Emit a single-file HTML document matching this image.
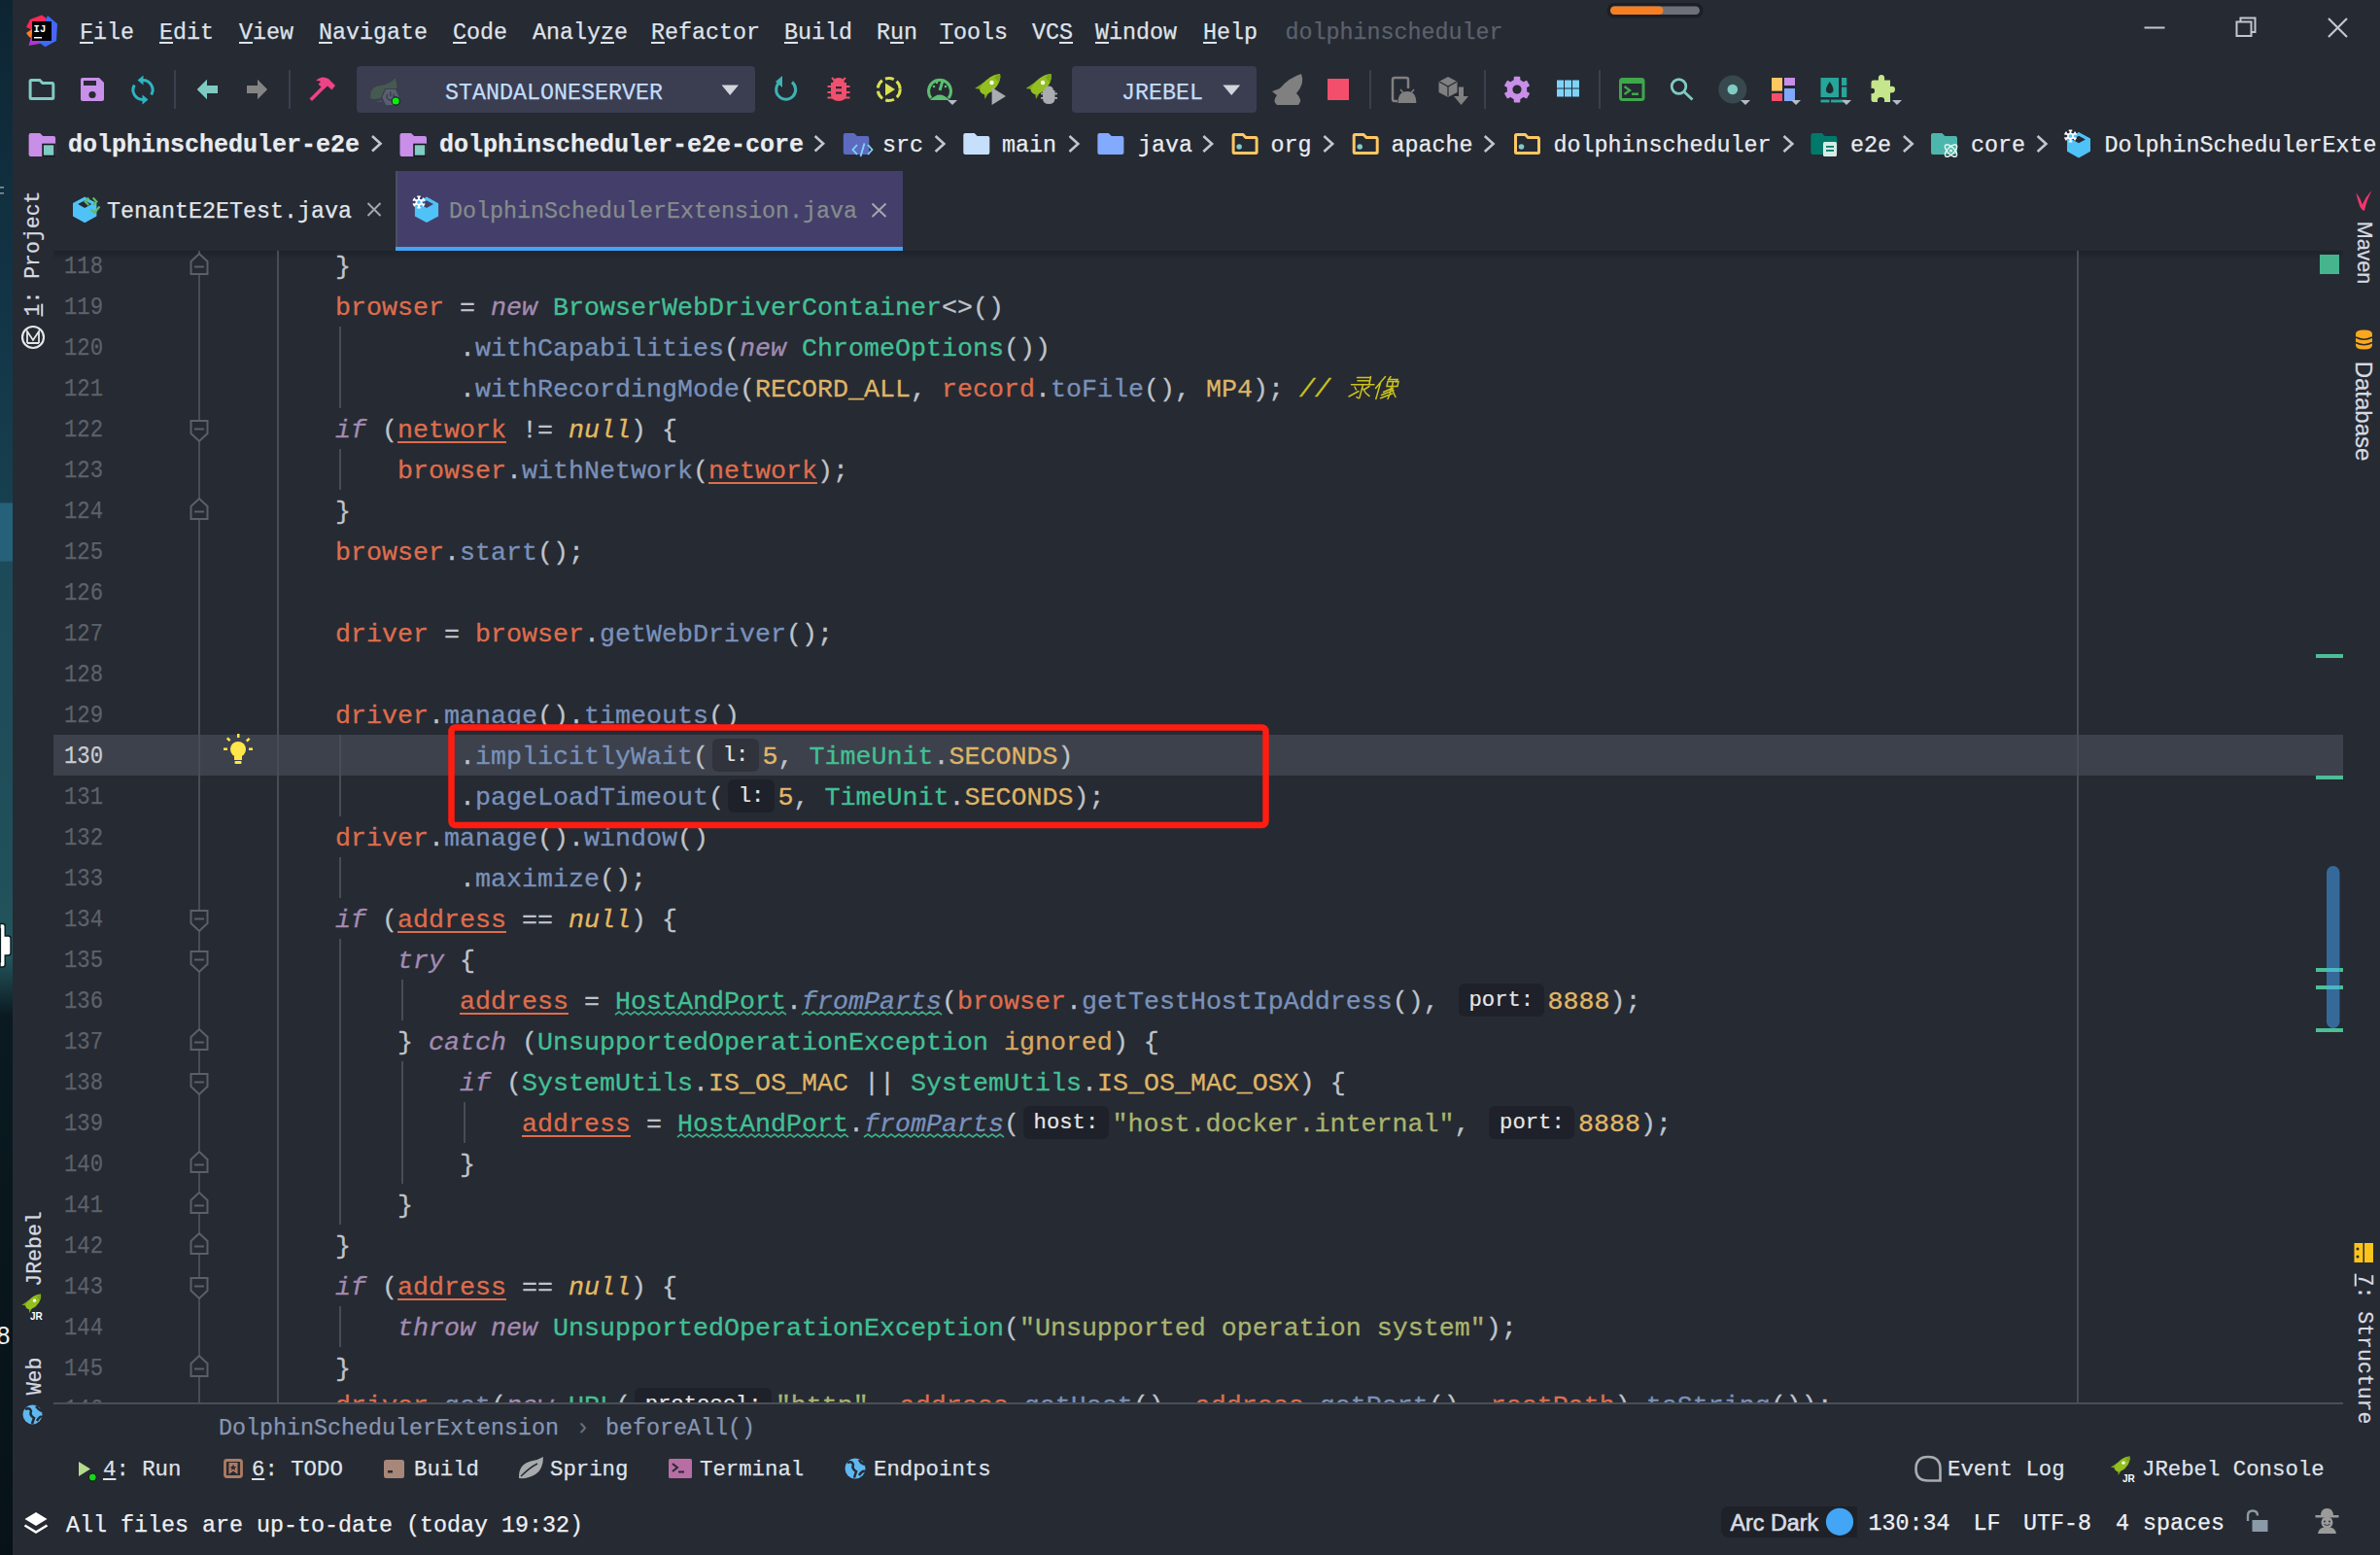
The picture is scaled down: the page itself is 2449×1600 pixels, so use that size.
<!DOCTYPE html><html><head><meta charset="utf-8"><style>
html,body{margin:0;padding:0}body{width:2449px;height:1600px;overflow:hidden;position:relative;background:#262a33}
.t{position:absolute;white-space:pre;-webkit-text-stroke:0.25px currentColor}.r{position:absolute}
.code{-webkit-text-stroke:0.3px currentColor;position:absolute;left:0;top:0;white-space:pre;font-family:"Liberation Mono",monospace;font-size:26.662px;height:42px;line-height:42px}
.hint{display:inline-block;position:relative;height:42px;vertical-align:top}
.hint b{position:absolute;left:4px;top:2px;-webkit-text-stroke:0.2px currentColor;height:34px;border-radius:6px;background:rgba(8,10,14,0.24);font-weight:normal;font-size:22.22px;line-height:36px;color:#e6e6e6;text-indent:10.7px}
</style></head><body>
<div class="r" style="left:0;top:0;width:13px;height:1600px;background:linear-gradient(180deg,#0d2533 0px,#123445 300px,#17404f 517px,#25627a 518px,#25627a 577px,#1d4a58 578px,#20505a 900px,#24555c 985px,#0a1a20 1045px,#061216 1600px)"></div>
<div class="r" style="left:367px;top:68px;width:410px;height:48px;background:#3b3d51;border-radius:4px;"></div>
<div class="r" style="left:1103px;top:68px;width:190px;height:48px;background:#3b3d51;border-radius:4px;"></div>
<div class="r" style="left:407px;top:176px;width:522px;height:78px;background:#433f6a;"></div>
<div class="r" style="left:407px;top:254px;width:522px;height:6px;background:#42a5f5;"></div>
<div class="r" style="left:407px;top:176px;width:2px;height:78px;background:#4d5060;"></div>
<div class="r" style="left:55px;top:258px;width:2356px;height:9px;background:linear-gradient(180deg,#1f2229,#262a33);"></div>
<div class="r" style="left:55px;top:756px;width:2356px;height:42px;background:#3d414c;"></div>
<div class="r" style="left:1771px;top:1550px;width:140px;height:32px;background:#1e2128;border-radius:8px 0 0 8px;"></div>
<div style="position:absolute;left:0;top:258px;width:2411px;height:1186px;overflow:hidden">
<div class="code" style="left:345.00px;top:-4px"><span style="color:#bfc3c9;">}</span></div>
<div class="code" style="left:345.00px;top:38px"><span style="color:#de6d4c;">browser</span><span style="color:#bfc3c9;"> = </span><span style="color:#a38bb1;font-style:italic;">new</span><span style="color:#bfc3c9;"> </span><span style="color:#42c094;">BrowserWebDriverContainer</span><span style="color:#bfc3c9;">&lt;&gt;()</span></div>
<div class="code" style="left:473.00px;top:80px"><span style="color:#bfc3c9;">.</span><span style="color:#7991ba;">withCapabilities</span><span style="color:#bfc3c9;">(</span><span style="color:#a38bb1;font-style:italic;">new</span><span style="color:#bfc3c9;"> </span><span style="color:#42c094;">ChromeOptions</span><span style="color:#bfc3c9;">())</span></div>
<div class="code" style="left:473.00px;top:122px"><span style="color:#bfc3c9;">.</span><span style="color:#7991ba;">withRecordingMode</span><span style="color:#bfc3c9;">(</span><span style="color:#dfb467;">RECORD_ALL</span><span style="color:#bfc3c9;">, </span><span style="color:#de6d4c;">record</span><span style="color:#bfc3c9;">.</span><span style="color:#7991ba;">toFile</span><span style="color:#bfc3c9;">(), </span><span style="color:#dfb467;">MP4</span><span style="color:#bfc3c9;">); </span><span style="color:#c8c41c;font-style:italic;">// </span><span style="display:inline-block;width:60px"></span></div>
<div class="code" style="left:345.00px;top:164px"><span style="color:#a38bb1;font-style:italic;">if</span><span style="color:#bfc3c9;"> (</span><span style="color:#de6d4c;text-decoration:underline;text-decoration-thickness:2px;text-underline-offset:3.5px;">network</span><span style="color:#bfc3c9;"> != </span><span style="color:#e2bb63;font-style:italic;">null</span><span style="color:#bfc3c9;">) {</span></div>
<div class="code" style="left:409.00px;top:206px"><span style="color:#de6d4c;">browser</span><span style="color:#bfc3c9;">.</span><span style="color:#7991ba;">withNetwork</span><span style="color:#bfc3c9;">(</span><span style="color:#de6d4c;text-decoration:underline;text-decoration-thickness:2px;text-underline-offset:3.5px;">network</span><span style="color:#bfc3c9;">);</span></div>
<div class="code" style="left:345.00px;top:248px"><span style="color:#bfc3c9;">}</span></div>
<div class="code" style="left:345.00px;top:290px"><span style="color:#de6d4c;">browser</span><span style="color:#bfc3c9;">.</span><span style="color:#7991ba;">start</span><span style="color:#bfc3c9;">();</span></div>
<div class="code" style="left:345.00px;top:332px"></div>
<div class="code" style="left:345.00px;top:374px"><span style="color:#de6d4c;">driver</span><span style="color:#bfc3c9;"> = </span><span style="color:#de6d4c;">browser</span><span style="color:#bfc3c9;">.</span><span style="color:#7991ba;">getWebDriver</span><span style="color:#bfc3c9;">();</span></div>
<div class="code" style="left:345.00px;top:416px"></div>
<div class="code" style="left:345.00px;top:458px"><span style="color:#de6d4c;">driver</span><span style="color:#bfc3c9;">.</span><span style="color:#7991ba;">manage</span><span style="color:#bfc3c9;">().</span><span style="color:#7991ba;">timeouts</span><span style="color:#bfc3c9;">()</span></div>
<div class="code" style="left:473.00px;top:500px"><span style="color:#bfc3c9;">.</span><span style="color:#7991ba;">implicitlyWait</span><span style="color:#bfc3c9;">(</span><span class="hint" style="width:55.57px"><b style="width:48.07px">l:</b></span><span style="color:#e2b866;">5</span><span style="color:#bfc3c9;">, </span><span style="color:#42c094;">TimeUnit</span><span style="color:#bfc3c9;">.</span><span style="color:#dfb467;">SECONDS</span><span style="color:#bfc3c9;">)</span></div>
<div class="code" style="left:473.00px;top:542px"><span style="color:#bfc3c9;">.</span><span style="color:#7991ba;">pageLoadTimeout</span><span style="color:#bfc3c9;">(</span><span class="hint" style="width:55.57px"><b style="width:48.07px">l:</b></span><span style="color:#e2b866;">5</span><span style="color:#bfc3c9;">, </span><span style="color:#42c094;">TimeUnit</span><span style="color:#bfc3c9;">.</span><span style="color:#dfb467;">SECONDS</span><span style="color:#bfc3c9;">);</span></div>
<div class="code" style="left:345.00px;top:584px"><span style="color:#de6d4c;">driver</span><span style="color:#bfc3c9;">.</span><span style="color:#7991ba;">manage</span><span style="color:#bfc3c9;">().</span><span style="color:#7991ba;">window</span><span style="color:#bfc3c9;">()</span></div>
<div class="code" style="left:473.00px;top:626px"><span style="color:#bfc3c9;">.</span><span style="color:#7991ba;">maximize</span><span style="color:#bfc3c9;">();</span></div>
<div class="code" style="left:345.00px;top:668px"><span style="color:#a38bb1;font-style:italic;">if</span><span style="color:#bfc3c9;"> (</span><span style="color:#de6d4c;text-decoration:underline;text-decoration-thickness:2px;text-underline-offset:3.5px;">address</span><span style="color:#bfc3c9;"> == </span><span style="color:#e2bb63;font-style:italic;">null</span><span style="color:#bfc3c9;">) {</span></div>
<div class="code" style="left:409.00px;top:710px"><span style="color:#a38bb1;font-style:italic;">try</span><span style="color:#bfc3c9;"> {</span></div>
<div class="code" style="left:473.00px;top:752px"><span style="color:#de6d4c;text-decoration:underline;text-decoration-thickness:2px;text-underline-offset:3.5px;">address</span><span style="color:#bfc3c9;"> = </span><span style="color:#42c094;">HostAndPort</span><span style="color:#bfc3c9;">.</span><span style="color:#7991ba;font-style:italic;">fromParts</span><span style="color:#bfc3c9;">(</span><span style="color:#de6d4c;">browser</span><span style="color:#bfc3c9;">.</span><span style="color:#7991ba;">getTestHostIpAddress</span><span style="color:#bfc3c9;">(), </span><span class="hint" style="width:95.56px"><b style="width:88.06px">port:</b></span><span style="color:#e2b866;">8888</span><span style="color:#bfc3c9;">);</span></div>
<div class="code" style="left:409.00px;top:794px"><span style="color:#bfc3c9;">} </span><span style="color:#a38bb1;font-style:italic;">catch</span><span style="color:#bfc3c9;"> (</span><span style="color:#42c094;">UnsupportedOperationException</span><span style="color:#bfc3c9;"> </span><span style="color:#d8a862;">ignored</span><span style="color:#bfc3c9;">) {</span></div>
<div class="code" style="left:473.00px;top:836px"><span style="color:#a38bb1;font-style:italic;">if</span><span style="color:#bfc3c9;"> (</span><span style="color:#42c094;">SystemUtils</span><span style="color:#bfc3c9;">.</span><span style="color:#dfb467;">IS_OS_MAC</span><span style="color:#bfc3c9;"> || </span><span style="color:#42c094;">SystemUtils</span><span style="color:#bfc3c9;">.</span><span style="color:#dfb467;">IS_OS_MAC_OSX</span><span style="color:#bfc3c9;">) {</span></div>
<div class="code" style="left:537.00px;top:878px"><span style="color:#de6d4c;text-decoration:underline;text-decoration-thickness:2px;text-underline-offset:3.5px;">address</span><span style="color:#bfc3c9;"> = </span><span style="color:#42c094;">HostAndPort</span><span style="color:#bfc3c9;">.</span><span style="color:#7991ba;font-style:italic;">fromParts</span><span style="color:#bfc3c9;">(</span><span class="hint" style="width:95.56px"><b style="width:88.06px">host:</b></span><span style="color:#a9b46f;">"host.docker.internal"</span><span style="color:#bfc3c9;">, </span><span class="hint" style="width:95.56px"><b style="width:88.06px">port:</b></span><span style="color:#e2b866;">8888</span><span style="color:#bfc3c9;">);</span></div>
<div class="code" style="left:473.00px;top:920px"><span style="color:#bfc3c9;">}</span></div>
<div class="code" style="left:409.00px;top:962px"><span style="color:#bfc3c9;">}</span></div>
<div class="code" style="left:345.00px;top:1004px"><span style="color:#bfc3c9;">}</span></div>
<div class="code" style="left:345.00px;top:1046px"><span style="color:#a38bb1;font-style:italic;">if</span><span style="color:#bfc3c9;"> (</span><span style="color:#de6d4c;text-decoration:underline;text-decoration-thickness:2px;text-underline-offset:3.5px;">address</span><span style="color:#bfc3c9;"> == </span><span style="color:#e2bb63;font-style:italic;">null</span><span style="color:#bfc3c9;">) {</span></div>
<div class="code" style="left:409.00px;top:1088px"><span style="color:#a38bb1;font-style:italic;">throw</span><span style="color:#bfc3c9;"> </span><span style="color:#a38bb1;font-style:italic;">new</span><span style="color:#bfc3c9;"> </span><span style="color:#42c094;">UnsupportedOperationException</span><span style="color:#bfc3c9;">(</span><span style="color:#a9b46f;">"Unsupported operation system"</span><span style="color:#bfc3c9;">);</span></div>
<div class="code" style="left:345.00px;top:1130px"><span style="color:#bfc3c9;">}</span></div>
<div class="code" style="left:345.00px;top:1168px"><span style="color:#de6d4c;">driver</span><span style="color:#bfc3c9;">.</span><span style="color:#7991ba;">get</span><span style="color:#bfc3c9;">(</span><span style="color:#a38bb1;font-style:italic;">new</span><span style="color:#bfc3c9;"> </span><span style="color:#42c094;">URL</span><span style="color:#bfc3c9;">(</span><span class="hint" style="width:148.90px"><b style="width:141.40px">protocol:</b></span><span style="color:#a9b46f;">"http"</span><span style="color:#bfc3c9;">, </span><span style="color:#de6d4c;">address</span><span style="color:#bfc3c9;">.</span><span style="color:#7991ba;">getHost</span><span style="color:#bfc3c9;">(), </span><span style="color:#de6d4c;">address</span><span style="color:#bfc3c9;">.</span><span style="color:#7991ba;">getPort</span><span style="color:#bfc3c9;">(), </span><span style="color:#de6d4c;">rootPath</span><span style="color:#bfc3c9;">).</span><span style="color:#7991ba;">toString</span><span style="color:#bfc3c9;">());</span></div>
</div>
<div style="position:absolute;left:52.5px;top:258px;width:100px;height:1186px;overflow:hidden">
<div class="t" style="left:0;width:53px;text-align:right;top:1.48px;font-size:26.0px;line-height:31.200px;color:#5d6169;font-family:'Liberation Mono', monospace;transform:scaleX(0.855);transform-origin:53px 0">118</div>
<div class="t" style="left:0;width:53px;text-align:right;top:43.48px;font-size:26.0px;line-height:31.200px;color:#5d6169;font-family:'Liberation Mono', monospace;transform:scaleX(0.855);transform-origin:53px 0">119</div>
<div class="t" style="left:0;width:53px;text-align:right;top:85.48px;font-size:26.0px;line-height:31.200px;color:#5d6169;font-family:'Liberation Mono', monospace;transform:scaleX(0.855);transform-origin:53px 0">120</div>
<div class="t" style="left:0;width:53px;text-align:right;top:127.48px;font-size:26.0px;line-height:31.200px;color:#5d6169;font-family:'Liberation Mono', monospace;transform:scaleX(0.855);transform-origin:53px 0">121</div>
<div class="t" style="left:0;width:53px;text-align:right;top:169.48px;font-size:26.0px;line-height:31.200px;color:#5d6169;font-family:'Liberation Mono', monospace;transform:scaleX(0.855);transform-origin:53px 0">122</div>
<div class="t" style="left:0;width:53px;text-align:right;top:211.48px;font-size:26.0px;line-height:31.200px;color:#5d6169;font-family:'Liberation Mono', monospace;transform:scaleX(0.855);transform-origin:53px 0">123</div>
<div class="t" style="left:0;width:53px;text-align:right;top:253.48px;font-size:26.0px;line-height:31.200px;color:#5d6169;font-family:'Liberation Mono', monospace;transform:scaleX(0.855);transform-origin:53px 0">124</div>
<div class="t" style="left:0;width:53px;text-align:right;top:295.48px;font-size:26.0px;line-height:31.200px;color:#5d6169;font-family:'Liberation Mono', monospace;transform:scaleX(0.855);transform-origin:53px 0">125</div>
<div class="t" style="left:0;width:53px;text-align:right;top:337.48px;font-size:26.0px;line-height:31.200px;color:#5d6169;font-family:'Liberation Mono', monospace;transform:scaleX(0.855);transform-origin:53px 0">126</div>
<div class="t" style="left:0;width:53px;text-align:right;top:379.48px;font-size:26.0px;line-height:31.200px;color:#5d6169;font-family:'Liberation Mono', monospace;transform:scaleX(0.855);transform-origin:53px 0">127</div>
<div class="t" style="left:0;width:53px;text-align:right;top:421.48px;font-size:26.0px;line-height:31.200px;color:#5d6169;font-family:'Liberation Mono', monospace;transform:scaleX(0.855);transform-origin:53px 0">128</div>
<div class="t" style="left:0;width:53px;text-align:right;top:463.48px;font-size:26.0px;line-height:31.200px;color:#5d6169;font-family:'Liberation Mono', monospace;transform:scaleX(0.855);transform-origin:53px 0">129</div>
<div class="t" style="left:0;width:53px;text-align:right;top:505.48px;font-size:26.0px;line-height:31.200px;color:#c9ccd0;font-family:'Liberation Mono', monospace;transform:scaleX(0.855);transform-origin:53px 0">130</div>
<div class="t" style="left:0;width:53px;text-align:right;top:547.48px;font-size:26.0px;line-height:31.200px;color:#5d6169;font-family:'Liberation Mono', monospace;transform:scaleX(0.855);transform-origin:53px 0">131</div>
<div class="t" style="left:0;width:53px;text-align:right;top:589.48px;font-size:26.0px;line-height:31.200px;color:#5d6169;font-family:'Liberation Mono', monospace;transform:scaleX(0.855);transform-origin:53px 0">132</div>
<div class="t" style="left:0;width:53px;text-align:right;top:631.48px;font-size:26.0px;line-height:31.200px;color:#5d6169;font-family:'Liberation Mono', monospace;transform:scaleX(0.855);transform-origin:53px 0">133</div>
<div class="t" style="left:0;width:53px;text-align:right;top:673.48px;font-size:26.0px;line-height:31.200px;color:#5d6169;font-family:'Liberation Mono', monospace;transform:scaleX(0.855);transform-origin:53px 0">134</div>
<div class="t" style="left:0;width:53px;text-align:right;top:715.48px;font-size:26.0px;line-height:31.200px;color:#5d6169;font-family:'Liberation Mono', monospace;transform:scaleX(0.855);transform-origin:53px 0">135</div>
<div class="t" style="left:0;width:53px;text-align:right;top:757.48px;font-size:26.0px;line-height:31.200px;color:#5d6169;font-family:'Liberation Mono', monospace;transform:scaleX(0.855);transform-origin:53px 0">136</div>
<div class="t" style="left:0;width:53px;text-align:right;top:799.48px;font-size:26.0px;line-height:31.200px;color:#5d6169;font-family:'Liberation Mono', monospace;transform:scaleX(0.855);transform-origin:53px 0">137</div>
<div class="t" style="left:0;width:53px;text-align:right;top:841.48px;font-size:26.0px;line-height:31.200px;color:#5d6169;font-family:'Liberation Mono', monospace;transform:scaleX(0.855);transform-origin:53px 0">138</div>
<div class="t" style="left:0;width:53px;text-align:right;top:883.48px;font-size:26.0px;line-height:31.200px;color:#5d6169;font-family:'Liberation Mono', monospace;transform:scaleX(0.855);transform-origin:53px 0">139</div>
<div class="t" style="left:0;width:53px;text-align:right;top:925.48px;font-size:26.0px;line-height:31.200px;color:#5d6169;font-family:'Liberation Mono', monospace;transform:scaleX(0.855);transform-origin:53px 0">140</div>
<div class="t" style="left:0;width:53px;text-align:right;top:967.48px;font-size:26.0px;line-height:31.200px;color:#5d6169;font-family:'Liberation Mono', monospace;transform:scaleX(0.855);transform-origin:53px 0">141</div>
<div class="t" style="left:0;width:53px;text-align:right;top:1009.48px;font-size:26.0px;line-height:31.200px;color:#5d6169;font-family:'Liberation Mono', monospace;transform:scaleX(0.855);transform-origin:53px 0">142</div>
<div class="t" style="left:0;width:53px;text-align:right;top:1051.48px;font-size:26.0px;line-height:31.200px;color:#5d6169;font-family:'Liberation Mono', monospace;transform:scaleX(0.855);transform-origin:53px 0">143</div>
<div class="t" style="left:0;width:53px;text-align:right;top:1093.48px;font-size:26.0px;line-height:31.200px;color:#5d6169;font-family:'Liberation Mono', monospace;transform:scaleX(0.855);transform-origin:53px 0">144</div>
<div class="t" style="left:0;width:53px;text-align:right;top:1135.48px;font-size:26.0px;line-height:31.200px;color:#5d6169;font-family:'Liberation Mono', monospace;transform:scaleX(0.855);transform-origin:53px 0">145</div>
<div class="t" style="left:0;width:53px;text-align:right;top:1177.48px;font-size:26.0px;line-height:31.200px;color:#5d6169;font-family:'Liberation Mono', monospace;transform:scaleX(0.855);transform-origin:53px 0">146</div>
</div>
<div class="t" style="left:82.00px;top:19.79px;font-size:23.330px;line-height:27.996px;color:#dfe3ea;font-family:'Liberation Mono', monospace;font-weight:normal;font-style:normal;"><span style="text-decoration:underline;text-decoration-thickness:2px;text-underline-offset:3px">F</span>ile</div>
<div class="t" style="left:164.00px;top:19.79px;font-size:23.330px;line-height:27.996px;color:#dfe3ea;font-family:'Liberation Mono', monospace;font-weight:normal;font-style:normal;"><span style="text-decoration:underline;text-decoration-thickness:2px;text-underline-offset:3px">E</span>dit</div>
<div class="t" style="left:246.00px;top:19.79px;font-size:23.330px;line-height:27.996px;color:#dfe3ea;font-family:'Liberation Mono', monospace;font-weight:normal;font-style:normal;"><span style="text-decoration:underline;text-decoration-thickness:2px;text-underline-offset:3px">V</span>iew</div>
<div class="t" style="left:328.00px;top:19.79px;font-size:23.330px;line-height:27.996px;color:#dfe3ea;font-family:'Liberation Mono', monospace;font-weight:normal;font-style:normal;"><span style="text-decoration:underline;text-decoration-thickness:2px;text-underline-offset:3px">N</span>avigate</div>
<div class="t" style="left:466.00px;top:19.79px;font-size:23.330px;line-height:27.996px;color:#dfe3ea;font-family:'Liberation Mono', monospace;font-weight:normal;font-style:normal;"><span style="text-decoration:underline;text-decoration-thickness:2px;text-underline-offset:3px">C</span>ode</div>
<div class="t" style="left:548.00px;top:19.79px;font-size:23.330px;line-height:27.996px;color:#dfe3ea;font-family:'Liberation Mono', monospace;font-weight:normal;font-style:normal;">Analy<span style="text-decoration:underline;text-decoration-thickness:2px;text-underline-offset:3px">z</span>e</div>
<div class="t" style="left:670.00px;top:19.79px;font-size:23.330px;line-height:27.996px;color:#dfe3ea;font-family:'Liberation Mono', monospace;font-weight:normal;font-style:normal;"><span style="text-decoration:underline;text-decoration-thickness:2px;text-underline-offset:3px">R</span>efactor</div>
<div class="t" style="left:807.00px;top:19.79px;font-size:23.330px;line-height:27.996px;color:#dfe3ea;font-family:'Liberation Mono', monospace;font-weight:normal;font-style:normal;"><span style="text-decoration:underline;text-decoration-thickness:2px;text-underline-offset:3px">B</span>uild</div>
<div class="t" style="left:902.00px;top:19.79px;font-size:23.330px;line-height:27.996px;color:#dfe3ea;font-family:'Liberation Mono', monospace;font-weight:normal;font-style:normal;">R<span style="text-decoration:underline;text-decoration-thickness:2px;text-underline-offset:3px">u</span>n</div>
<div class="t" style="left:967.00px;top:19.79px;font-size:23.330px;line-height:27.996px;color:#dfe3ea;font-family:'Liberation Mono', monospace;font-weight:normal;font-style:normal;"><span style="text-decoration:underline;text-decoration-thickness:2px;text-underline-offset:3px">T</span>ools</div>
<div class="t" style="left:1062.00px;top:19.79px;font-size:23.330px;line-height:27.996px;color:#dfe3ea;font-family:'Liberation Mono', monospace;font-weight:normal;font-style:normal;">VC<span style="text-decoration:underline;text-decoration-thickness:2px;text-underline-offset:3px">S</span></div>
<div class="t" style="left:1127.00px;top:19.79px;font-size:23.330px;line-height:27.996px;color:#dfe3ea;font-family:'Liberation Mono', monospace;font-weight:normal;font-style:normal;"><span style="text-decoration:underline;text-decoration-thickness:2px;text-underline-offset:3px">W</span>indow</div>
<div class="t" style="left:1238.00px;top:19.79px;font-size:23.330px;line-height:27.996px;color:#dfe3ea;font-family:'Liberation Mono', monospace;font-weight:normal;font-style:normal;"><span style="text-decoration:underline;text-decoration-thickness:2px;text-underline-offset:3px">H</span>elp</div>
<div class="t" style="left:1322.50px;top:19.79px;font-size:23.330px;line-height:27.996px;color:#5b616c;font-family:'Liberation Mono', monospace;font-weight:normal;font-style:normal;">dolphinscheduler</div>
<div class="t" style="left:458.00px;top:81.79px;font-size:23.330px;line-height:27.996px;color:#c2dcf7;font-family:'Liberation Mono', monospace;font-weight:normal;font-style:normal;">STANDALONESERVER</div>
<div class="t" style="left:1154.00px;top:81.79px;font-size:23.330px;line-height:27.996px;color:#c2dcf7;font-family:'Liberation Mono', monospace;font-weight:normal;font-style:normal;">JREBEL</div>
<div class="t" style="left:70.00px;top:134.85px;font-size:25.000px;line-height:30.000px;color:#e9ecf0;font-family:'Liberation Mono', monospace;font-weight:bold;font-style:normal;">dolphinscheduler-e2e</div>
<div class="t" style="left:452.00px;top:134.85px;font-size:25.000px;line-height:30.000px;color:#e9ecf0;font-family:'Liberation Mono', monospace;font-weight:bold;font-style:normal;">dolphinscheduler-e2e-core</div>
<div class="t" style="left:908.00px;top:136.29px;font-size:23.330px;line-height:27.996px;color:#e9ecf0;font-family:'Liberation Mono', monospace;font-weight:normal;font-style:normal;">src</div>
<div class="t" style="left:1031.00px;top:136.29px;font-size:23.330px;line-height:27.996px;color:#e9ecf0;font-family:'Liberation Mono', monospace;font-weight:normal;font-style:normal;">main</div>
<div class="t" style="left:1171.00px;top:136.29px;font-size:23.330px;line-height:27.996px;color:#e9ecf0;font-family:'Liberation Mono', monospace;font-weight:normal;font-style:normal;">java</div>
<div class="t" style="left:1307.50px;top:136.29px;font-size:23.330px;line-height:27.996px;color:#e9ecf0;font-family:'Liberation Mono', monospace;font-weight:normal;font-style:normal;">org</div>
<div class="t" style="left:1431.50px;top:136.29px;font-size:23.330px;line-height:27.996px;color:#e9ecf0;font-family:'Liberation Mono', monospace;font-weight:normal;font-style:normal;">apache</div>
<div class="t" style="left:1598.50px;top:136.29px;font-size:23.330px;line-height:27.996px;color:#e9ecf0;font-family:'Liberation Mono', monospace;font-weight:normal;font-style:normal;">dolphinscheduler</div>
<div class="t" style="left:1904.00px;top:136.29px;font-size:23.330px;line-height:27.996px;color:#e9ecf0;font-family:'Liberation Mono', monospace;font-weight:normal;font-style:normal;">e2e</div>
<div class="t" style="left:2028.00px;top:136.29px;font-size:23.330px;line-height:27.996px;color:#e9ecf0;font-family:'Liberation Mono', monospace;font-weight:normal;font-style:normal;">core</div>
<div class="t" style="left:2165.50px;top:136.29px;font-size:23.330px;line-height:27.996px;color:#e9ecf0;font-family:'Liberation Mono', monospace;font-weight:normal;font-style:normal;">DolphinSchedulerExte</div>
<div class="t" style="left:110.00px;top:203.79px;font-size:23.330px;line-height:27.996px;color:#e1e5ea;font-family:'Liberation Mono', monospace;font-weight:normal;font-style:normal;">TenantE2ETest.java</div>
<div class="t" style="left:462.00px;top:203.79px;font-size:23.330px;line-height:27.996px;color:#868c8c;font-family:'Liberation Mono', monospace;font-weight:normal;font-style:normal;">DolphinSchedulerExtension.java</div>
<div class="t" style="left:35px;top:261px;font-size:21.5px;line-height:21.5px;color:#d6dae0;font-family:'Liberation Mono', monospace;font-weight:normal;transform:translate(-50%,-50%) rotate(-90deg)"><span style="text-decoration:underline;text-underline-offset:2px">1</span>: Project</div>
<div class="t" style="left:36.5px;top:1284.5px;font-size:21.5px;line-height:21.5px;color:#d6dae0;font-family:'Liberation Mono', monospace;font-weight:normal;transform:translate(-50%,-50%) rotate(-90deg)">JRebel</div>
<div class="t" style="left:36.5px;top:1416px;font-size:21.5px;line-height:21.5px;color:#d6dae0;font-family:'Liberation Mono', monospace;font-weight:normal;transform:translate(-50%,-50%) rotate(-90deg)">Web</div>
<div class="t" style="left:2432px;top:260px;font-size:21.5px;line-height:21.5px;color:#d6dae0;font-family:'Liberation Sans', sans-serif;font-weight:normal;transform:translate(-50%,-50%) rotate(90deg)">Maven</div>
<div class="t" style="left:2432px;top:422.5px;font-size:24.0px;line-height:24.0px;color:#d6dae0;font-family:'Liberation Sans', sans-serif;font-weight:normal;transform:translate(-50%,-50%) rotate(90deg)">Database</div>
<div class="t" style="left:2432px;top:1388px;font-size:21.5px;line-height:21.5px;color:#d6dae0;font-family:'Liberation Mono', monospace;font-weight:normal;transform:translate(-50%,-50%) rotate(90deg)"><span style="text-decoration:underline;text-underline-offset:2px">7</span>: Structure</div>
<div class="t" style="left:225.00px;top:1455.79px;font-size:23.330px;line-height:27.996px;color:#8796b2;font-family:'Liberation Mono', monospace;font-weight:normal;font-style:normal;">DolphinSchedulerExtension</div>
<div class="t" style="left:623.00px;top:1455.79px;font-size:23.330px;line-height:27.996px;color:#8796b2;font-family:'Liberation Mono', monospace;font-weight:normal;font-style:normal;">beforeAll()</div>
<div class="t" style="left:596.00px;top:1453.91px;font-size:23.330px;line-height:27.996px;color:#6a7280;font-family:'Liberation Sans', sans-serif;font-weight:normal;font-style:normal;">›</div>
<div class="t" style="left:106.00px;top:1499.16px;font-size:22.330px;line-height:26.796px;color:#dfe3ea;font-family:'Liberation Mono', monospace;font-weight:normal;font-style:normal;"><span style="text-decoration:underline;text-decoration-thickness:2px;text-underline-offset:3px">4</span>: Run</div>
<div class="t" style="left:259.00px;top:1499.16px;font-size:22.330px;line-height:26.796px;color:#dfe3ea;font-family:'Liberation Mono', monospace;font-weight:normal;font-style:normal;"><span style="text-decoration:underline;text-decoration-thickness:2px;text-underline-offset:3px">6</span>: TODO</div>
<div class="t" style="left:426.00px;top:1499.16px;font-size:22.330px;line-height:26.796px;color:#dfe3ea;font-family:'Liberation Mono', monospace;font-weight:normal;font-style:normal;">Build</div>
<div class="t" style="left:566.00px;top:1499.16px;font-size:22.330px;line-height:26.796px;color:#dfe3ea;font-family:'Liberation Mono', monospace;font-weight:normal;font-style:normal;">Spring</div>
<div class="t" style="left:720.00px;top:1499.16px;font-size:22.330px;line-height:26.796px;color:#dfe3ea;font-family:'Liberation Mono', monospace;font-weight:normal;font-style:normal;">Terminal</div>
<div class="t" style="left:899.00px;top:1499.16px;font-size:22.330px;line-height:26.796px;color:#dfe3ea;font-family:'Liberation Mono', monospace;font-weight:normal;font-style:normal;">Endpoints</div>
<div class="t" style="left:2004.00px;top:1499.16px;font-size:22.330px;line-height:26.796px;color:#dfe3ea;font-family:'Liberation Mono', monospace;font-weight:normal;font-style:normal;">Event Log</div>
<div class="t" style="left:2204.00px;top:1499.16px;font-size:22.330px;line-height:26.796px;color:#dfe3ea;font-family:'Liberation Mono', monospace;font-weight:normal;font-style:normal;">JRebel Console</div>
<div class="t" style="left:68.00px;top:1555.79px;font-size:23.330px;line-height:27.996px;color:#eef0f3;font-family:'Liberation Mono', monospace;font-weight:normal;font-style:normal;">All files are up-to-date (today 19:32)</div>
<div class="t" style="left:1922.50px;top:1553.79px;font-size:23.330px;line-height:27.996px;color:#eef0f3;font-family:'Liberation Mono', monospace;font-weight:normal;font-style:normal;">130:34</div>
<div class="t" style="left:2030.50px;top:1553.79px;font-size:23.330px;line-height:27.996px;color:#eef0f3;font-family:'Liberation Mono', monospace;font-weight:normal;font-style:normal;">LF</div>
<div class="t" style="left:2082.00px;top:1553.79px;font-size:23.330px;line-height:27.996px;color:#eef0f3;font-family:'Liberation Mono', monospace;font-weight:normal;font-style:normal;">UTF-8</div>
<div class="t" style="left:2177.00px;top:1553.79px;font-size:23.330px;line-height:27.996px;color:#eef0f3;font-family:'Liberation Mono', monospace;font-weight:normal;font-style:normal;">4 spaces</div>
<div class="t" style="left:1780.50px;top:1553.94px;font-size:23.300px;line-height:27.960px;color:#d8dce4;font-family:'Liberation Sans', sans-serif;font-weight:normal;font-style:normal;-webkit-text-stroke:0.6px #d8dce4;">Arc Dark</div>
<svg style="position:absolute;left:0;top:0" width="2449" height="1600" viewBox="0 0 2449 1600"><rect x="285" y="258" width="2" height="1186" fill="#484c56"/><rect x="204" y="258" width="2" height="1186" fill="#484c56"/><rect x="349.0" y="336" width="2" height="84" fill="#484c56"/><rect x="349.0" y="462" width="2" height="42" fill="#484c56"/><rect x="349.0" y="756" width="2" height="84" fill="#484c56"/><rect x="349.0" y="882" width="2" height="42" fill="#484c56"/><rect x="349.0" y="966" width="2" height="294" fill="#484c56"/><rect x="413.0" y="1008" width="2" height="42" fill="#484c56"/><rect x="413.0" y="1092" width="2" height="126" fill="#484c56"/><rect x="477.0" y="1134" width="2" height="42" fill="#484c56"/><rect x="349.0" y="1344" width="2" height="42" fill="#484c56"/><rect x="2137" y="258" width="2" height="1186" fill="#484c56"/><path d="M196.5 433 H213.5 V446 L205 454 L196.5 446 Z" fill="#262a33" stroke="#5a5f69" stroke-width="2"/><rect x="200" y="440.5" width="10" height="2" fill="#5a5f69"/><path d="M196.5 937 H213.5 V950 L205 958 L196.5 950 Z" fill="#262a33" stroke="#5a5f69" stroke-width="2"/><rect x="200" y="944.5" width="10" height="2" fill="#5a5f69"/><path d="M196.5 979 H213.5 V992 L205 1000 L196.5 992 Z" fill="#262a33" stroke="#5a5f69" stroke-width="2"/><rect x="200" y="986.5" width="10" height="2" fill="#5a5f69"/><path d="M196.5 1105 H213.5 V1118 L205 1126 L196.5 1118 Z" fill="#262a33" stroke="#5a5f69" stroke-width="2"/><rect x="200" y="1112.5" width="10" height="2" fill="#5a5f69"/><path d="M196.5 1315 H213.5 V1328 L205 1336 L196.5 1328 Z" fill="#262a33" stroke="#5a5f69" stroke-width="2"/><rect x="200" y="1322.5" width="10" height="2" fill="#5a5f69"/><path d="M196.5 282 H213.5 V269 L205 261 L196.5 269 Z" fill="#262a33" stroke="#5a5f69" stroke-width="2"/><rect x="200" y="273.5" width="10" height="2" fill="#5a5f69"/><path d="M196.5 534 H213.5 V521 L205 513 L196.5 521 Z" fill="#262a33" stroke="#5a5f69" stroke-width="2"/><rect x="200" y="525.5" width="10" height="2" fill="#5a5f69"/><path d="M196.5 1080 H213.5 V1067 L205 1059 L196.5 1067 Z" fill="#262a33" stroke="#5a5f69" stroke-width="2"/><rect x="200" y="1071.5" width="10" height="2" fill="#5a5f69"/><path d="M196.5 1206 H213.5 V1193 L205 1185 L196.5 1193 Z" fill="#262a33" stroke="#5a5f69" stroke-width="2"/><rect x="200" y="1197.5" width="10" height="2" fill="#5a5f69"/><path d="M196.5 1248 H213.5 V1235 L205 1227 L196.5 1235 Z" fill="#262a33" stroke="#5a5f69" stroke-width="2"/><rect x="200" y="1239.5" width="10" height="2" fill="#5a5f69"/><path d="M196.5 1290 H213.5 V1277 L205 1269 L196.5 1277 Z" fill="#262a33" stroke="#5a5f69" stroke-width="2"/><rect x="200" y="1281.5" width="10" height="2" fill="#5a5f69"/><path d="M196.5 1416 H213.5 V1403 L205 1395 L196.5 1403 Z" fill="#262a33" stroke="#5a5f69" stroke-width="2"/><rect x="200" y="1407.5" width="10" height="2" fill="#5a5f69"/><rect x="55" y="1443" width="2356" height="2" fill="#4a4e58"/><path d="M633.0 1044 L637.0 1041 L641.0 1044 L645.0 1041 L649.0 1044 L653.0 1041 L657.0 1044 L661.0 1041 L665.0 1044 L669.0 1041 L673.0 1044 L677.0 1041 L681.0 1044 L685.0 1041 L689.0 1044 L693.0 1041 L697.0 1044 L701.0 1041 L705.0 1044 L709.0 1041 L713.0 1044 L717.0 1041 L721.0 1044 L725.0 1041 L729.0 1044 L733.0 1041 L737.0 1044 L741.0 1041 L745.0 1044 L749.0 1041 L753.0 1044 L757.0 1041 L761.0 1044 L765.0 1041 L769.0 1044 L773.0 1041 L777.0 1044 L781.0 1041 L785.0 1044 L789.0 1041 L793.0 1044 L797.0 1041 L801.0 1044 L805.0 1041 L809.0 1044" fill="none" stroke="#3fae88" stroke-width="1.6"/><path d="M825.0 1044 L829.0 1041 L833.0 1044 L837.0 1041 L841.0 1044 L845.0 1041 L849.0 1044 L853.0 1041 L857.0 1044 L861.0 1041 L865.0 1044 L869.0 1041 L873.0 1044 L877.0 1041 L881.0 1044 L885.0 1041 L889.0 1044 L893.0 1041 L897.0 1044 L901.0 1041 L905.0 1044 L909.0 1041 L913.0 1044 L917.0 1041 L921.0 1044 L925.0 1041 L929.0 1044 L933.0 1041 L937.0 1044 L941.0 1041 L945.0 1044 L949.0 1041 L953.0 1044 L957.0 1041 L961.0 1044 L965.0 1041 L969.0 1044" fill="none" stroke="#3fae88" stroke-width="1.6"/><path d="M697.0 1170 L701.0 1167 L705.0 1170 L709.0 1167 L713.0 1170 L717.0 1167 L721.0 1170 L725.0 1167 L729.0 1170 L733.0 1167 L737.0 1170 L741.0 1167 L745.0 1170 L749.0 1167 L753.0 1170 L757.0 1167 L761.0 1170 L765.0 1167 L769.0 1170 L773.0 1167 L777.0 1170 L781.0 1167 L785.0 1170 L789.0 1167 L793.0 1170 L797.0 1167 L801.0 1170 L805.0 1167 L809.0 1170 L813.0 1167 L817.0 1170 L821.0 1167 L825.0 1170 L829.0 1167 L833.0 1170 L837.0 1167 L841.0 1170 L845.0 1167 L849.0 1170 L853.0 1167 L857.0 1170 L861.0 1167 L865.0 1170 L869.0 1167 L873.0 1170" fill="none" stroke="#3fae88" stroke-width="1.6"/><path d="M889.0 1170 L893.0 1167 L897.0 1170 L901.0 1167 L905.0 1170 L909.0 1167 L913.0 1170 L917.0 1167 L921.0 1170 L925.0 1167 L929.0 1170 L933.0 1167 L937.0 1170 L941.0 1167 L945.0 1170 L949.0 1167 L953.0 1170 L957.0 1167 L961.0 1170 L965.0 1167 L969.0 1170 L973.0 1167 L977.0 1170 L981.0 1167 L985.0 1170 L989.0 1167 L993.0 1170 L997.0 1167 L1001.0 1170 L1005.0 1167 L1009.0 1170 L1013.0 1167 L1017.0 1170 L1021.0 1167 L1025.0 1170 L1029.0 1167 L1033.0 1170" fill="none" stroke="#3fae88" stroke-width="1.6"/><rect x="464.5" y="748.5" width="838" height="100.5" rx="4" fill="none" stroke="#ff1d12" stroke-width="6.5"/><rect x="2387" y="262" width="20" height="20" fill="#46b58e"/><rect x="2383" y="673" width="28" height="4" fill="#4cbf96"/><rect x="2383" y="798" width="28" height="4" fill="#4cbf96"/><rect x="2383" y="996" width="28" height="4" fill="#4cbf96"/><rect x="2383" y="1014" width="28" height="4" fill="#4cbf96"/><rect x="2383" y="1058" width="28" height="4" fill="#4cbf96"/><rect x="2394" y="891" width="13.5" height="167" rx="6.75" fill="#35699a"/><rect x="2394" y="996" width="13.5" height="4" fill="#4ab8c4"/><rect x="2394" y="1014" width="13.5" height="4" fill="#4ab8c4"/><g fill="#ffe64a"><circle cx="245" cy="771" r="8"/><rect x="241" y="776" width="8" height="6"/><rect x="241.5" y="783" width="7" height="3" rx="1"/><rect x="244" y="755" width="2.5" height="4"/><rect x="230" y="769.5" width="4" height="2.5"/><rect x="256" y="769.5" width="4" height="2.5"/><rect x="234" y="759" width="2.5" height="4" transform="rotate(-45 235 761)"/><rect x="254" y="759" width="2.5" height="4" transform="rotate(45 255 761)"/></g><path d="M31 20 L43 15.5 L48 19 L40 34 L27 28 Z" fill="#fe2857"/><path d="M27 34 L34 29 L36 41 L30 38 Z" fill="#fe7d21"/><path d="M29.5 47 L34 30 L46 44 Z" fill="#b135d0"/><path d="M49 16 L59 24.5 L58 42 L46.5 48.3 L38 42 Z" fill="#3b6bff"/><path d="M47 21 L58 26 L56 40 L47 46 Z" fill="#5d5df5" opacity="0.6"/><rect x="33" y="22" width="20" height="20" fill="#000"/><text x="34.6" y="32.6" font-family="Liberation Mono, monospace" font-weight="bold" font-size="10.5" fill="#fff">IJ</text><rect x="35" y="38" width="8" height="1.5" fill="#fff"/><rect x="1653.5" y="3" width="99" height="15.6" rx="7.8" fill="#1c1f25"/><rect x="1657" y="6.4" width="92" height="8.6" rx="4.3" fill="#6d7077"/><rect x="1657" y="6.4" width="54.5" height="8.6" rx="4.3" fill="#f57f22"/><rect x="2206.5" y="27.5" width="21" height="2" fill="#c3c7cd"/><rect x="2301.5" y="22.5" width="15" height="14.5" fill="none" stroke="#c3c7cd" stroke-width="2"/><path d="M2305.5 22.5 V18.5 H2320.5 V33 H2316.5" fill="none" stroke="#c3c7cd" stroke-width="2"/><path d="M2396 19 L2415 38 M2415 19 L2396 38" stroke="#c3c7cd" stroke-width="2.2"/><path d="M32.1 82.5 H40.814 L43.814 85.5 H53.8 Q54.8 85.5 54.8 87.5 V100.5 Q54.8 101.5 53.8 101.5 H32.1 Q31.1 101.5 31.1 100.5 V83.5 Q31.1 82.5 32.1 82.5 Z" fill="none" stroke="#80cbc4" stroke-width="3"/><path d="M85 80 H102 L107 85 V102 Q107 104 105 104 H85 Q83 104 83 102 V82 Q83 80 85 80 Z" fill="#c990ea"/><rect x="86" y="83" width="13" height="5" fill="#262a33"/><circle cx="95" cy="97.5" r="3.6" fill="#262a33"/><path d="M147 82.5 A10 10 0 0 1 155.7 97.5 M147 102.5 A10 10 0 0 1 138.3 87.5" fill="none" stroke="#2cb5c0" stroke-width="3"/><path d="M141.5 82.5 L147.5 77.5 V87.5 Z M152.5 102.5 L146.5 97.5 V107.5 Z" fill="#2cb5c0"/><rect x="179" y="72" width="2" height="40" fill="#3b404e"/><rect x="297" y="72" width="2" height="40" fill="#3b404e"/><rect x="1409" y="72" width="2" height="40" fill="#3b404e"/><rect x="1527" y="72" width="2" height="40" fill="#3b404e"/><rect x="1645" y="72" width="2" height="40" fill="#3b404e"/><path d="M202.7 92 L213 81.8 V88 H224 V96 H213 V102.2 Z" fill="#7ecbc2"/><path d="M275.1 92 L265 81.8 V88 H254 V96 H265 V102.2 Z" fill="#848484"/><path d="M318.5 101.5 L331 89 L333.5 91.5 L321 104 Z" fill="#ee4385"/><path d="M325 83 Q331 77 338 81 L343.5 86.5 L345 88 L341.5 92.5 L337 88.5 L333 92 L327.5 86.5 L330 84 Q328 82.5 325 83 Z" fill="#ee4385"/><path d="M381.5 101.5 Q379.5 89.5 391.5 88 Q402 86.8 406.8 80 Q408.3 85 408.6 91 H396 L391.5 101 Q386 102.5 381.5 101.5 Z" fill="#465a50"/><path d="M387 105 Q390 103.5 393 103.3 V105 Z" fill="#465a50"/><path d="M397 92.1 H407 L410.7 100 L407 108 H397 L393.3 100 Z" fill="#5a5f70"/><path d="M399 97 A3.6 3.6 0 1 0 404.5 97" fill="none" stroke="#3b3d51" stroke-width="1.4"/><rect x="401" y="94.3" width="1.5" height="5" fill="#3b3d51"/><circle cx="407.2" cy="104" r="4.1" fill="#06f206" stroke="#201d35" stroke-width="1.1"/><path d="M742.5 87.5 H760 L751.2 98 Z" fill="#d2d6dc"/><path d="M1258.3 87.5 H1276.2 L1267.2 98 Z" fill="#d2d6dc"/><path d="M803 84 A10 10 0 1 0 815 84.5" fill="none" stroke="#3fb2b2" stroke-width="3"/><path d="M805 78 L805 90 L798 84 Z" fill="#3fb2b2"/><path d="M855 85 H871 V97 Q871 104 863 104 Q855 104 855 97 Z" fill="#f0506e"/><path d="M857 85 Q858 80 863 80 Q868 80 869 85 Z" fill="#f0506e"/><path d="M856 80 L859 83 M870 80 L867 83" stroke="#f0506e" stroke-width="2"/><rect x="851.5" y="88" width="23" height="2" fill="#f0506e"/><rect x="851.5" y="94" width="23" height="2" fill="#f0506e"/><rect x="851.5" y="99.5" width="23" height="2" fill="#f0506e"/><rect x="860" y="89" width="6" height="2.2" fill="#262a33"/><rect x="860" y="94.5" width="6" height="2.2" fill="#262a33"/><circle cx="914.7" cy="92" r="11.5" fill="none" stroke="#d9e04f" stroke-width="3" stroke-dasharray="9 3.5"/><path d="M911 85.5 L921 92 L911 98.5 Z" fill="#d9e04f"/><path d="M958 101 A11.5 11.5 0 1 1 976 101" fill="none" stroke="#5cbf6e" stroke-width="3"/><path d="M957 103 Q967 92 977 103 Z" fill="#5cbf6e"/><path d="M967 93 L970 83" stroke="#5cbf6e" stroke-width="3"/><circle cx="961" cy="89" r="1.3" fill="#5cbf6e"/><circle cx="973" cy="89" r="1.3" fill="#5cbf6e"/><circle cx="964" cy="85" r="1.3" fill="#5cbf6e"/><path d="M975 103 H985 L980.0 108.0 Z" fill="#b4bcc8"/><g transform="translate(1002.5 75.5) scale(1.0)"><path d="M9.5 9.5 L0.5 15.5 L7 16.5 Z" fill="#7ea81a"/><path d="M16.5 17 L11 26.5 L10 19 Z" fill="#7ea81a"/><path d="M26.5 0.5 C27.8 7 24.5 13 18.5 18.5 L12.5 21.5 C9 22.5 5.5 19.5 5.5 16 L9 10 C14.5 4.5 20.5 0.5 26.5 0.5 Z" fill="#93c01f"/><path d="M26.5 0.5 C27.5 4 26.5 7 25 9 L20.5 4 C22.5 2 24.5 1 26.5 0.5 Z" fill="#7ea81a"/><circle cx="18" cy="9.5" r="2.2" fill="#fff"/></g><path d="M1020.6 90 L1035 99 L1020.6 108 Z" fill="#a9acb0"/><g transform="translate(1055 75.5) scale(1.0)"><path d="M9.5 9.5 L0.5 15.5 L7 16.5 Z" fill="#7ea81a"/><path d="M16.5 17 L11 26.5 L10 19 Z" fill="#7ea81a"/><path d="M26.5 0.5 C27.8 7 24.5 13 18.5 18.5 L12.5 21.5 C9 22.5 5.5 19.5 5.5 16 L9 10 C14.5 4.5 20.5 0.5 26.5 0.5 Z" fill="#93c01f"/><path d="M26.5 0.5 C27.5 4 26.5 7 25 9 L20.5 4 C22.5 2 24.5 1 26.5 0.5 Z" fill="#7ea81a"/><circle cx="18" cy="9.5" r="2.2" fill="#fff"/></g><path d="M1073 93 H1085.5 V101 Q1085.5 107 1079.2 107 Q1073 107 1073 101 Z" fill="#a9acb0"/><path d="M1074.5 93 Q1075 88.5 1079.2 88.5 Q1083.5 88.5 1084 93 Z" fill="#a9acb0"/><rect x="1071" y="95.5" width="17" height="1.8" fill="#a9acb0"/><rect x="1071" y="100" width="17" height="1.8" fill="#a9acb0"/><path d="M1339 76 Q1343 86 1334 96 Q1341 103 1336 108 H1314 Q1309 104 1314 98 Q1311 96 1309 94 L1317 91 Q1326 80 1339 76 Z" fill="#808080"/><rect x="1366" y="81" width="22" height="22" fill="#f34f6c"/><path d="M1435 80 H1447 Q1449 80 1449 82 V91" fill="none" stroke="#808080" stroke-width="2.5"/><path d="M1435 80 Q1433 80 1433 82 V102 Q1433 104 1435 104 H1438" fill="none" stroke="#808080" stroke-width="2.5"/><path d="M1438.5 106 Q1438.5 94 1448 94 Q1457.3 94 1457.3 106 Z" fill="#808080"/><path d="M1441 92 L1443.5 95 M1455 92 L1452.5 95" stroke="#808080" stroke-width="1.5"/><path d="M1490 79 L1499.5 84 V95 L1490 100 L1480.5 95 V84 Z" fill="#808080"/><path d="M1481 84 L1490 89 L1499 84 M1490 89 V99.5" stroke="#262a33" stroke-width="1.2" fill="none"/><rect x="1501" y="89.5" width="5" height="11" fill="#808080"/><path d="M1496 99 H1511 L1503.5 108 Z" fill="#808080"/><g transform="translate(1561 92.1)" fill="#c98ee8"><rect x="-3.3" y="-13.4" width="6.6" height="8" rx="1" transform="rotate(0)"/><rect x="-3.3" y="-13.4" width="6.6" height="8" rx="1" transform="rotate(60)"/><rect x="-3.3" y="-13.4" width="6.6" height="8" rx="1" transform="rotate(120)"/><rect x="-3.3" y="-13.4" width="6.6" height="8" rx="1" transform="rotate(180)"/><rect x="-3.3" y="-13.4" width="6.6" height="8" rx="1" transform="rotate(240)"/><rect x="-3.3" y="-13.4" width="6.6" height="8" rx="1" transform="rotate(300)"/><circle r="10.3"/></g><circle cx="1561" cy="92.1" r="4.6" fill="#262a33"/><rect x="1602" y="82.5" width="7" height="8" fill="#7fd3f8"/><rect x="1602" y="91.5" width="7" height="8" fill="#7fd3f8"/><rect x="1610" y="82.5" width="7" height="8" fill="#7fd3f8"/><rect x="1610" y="91.5" width="7" height="8" fill="#7fd3f8"/><rect x="1618" y="82.5" width="7" height="8" fill="#7fd3f8"/><rect x="1618" y="91.5" width="7" height="8" fill="#7fd3f8"/><rect x="1667.5" y="81.5" width="23.5" height="21" rx="2" fill="none" stroke="#3ea84b" stroke-width="3"/><rect x="1667" y="81" width="24.5" height="5" fill="#3ea84b"/><path d="M1671.5 89 L1677 93 L1671.5 97" fill="none" stroke="#3ea84b" stroke-width="2.4"/><rect x="1679" y="95.5" width="7" height="2.5" fill="#3ea84b"/><circle cx="1727.5" cy="89" r="7.3" fill="none" stroke="#80cbc4" stroke-width="2.8"/><path d="M1732.5 94 L1741.5 102.5" stroke="#80cbc4" stroke-width="2.8"/><circle cx="1782.8" cy="92" r="14.5" fill="#37494f"/><circle cx="1782.8" cy="92" r="5.3" fill="#80cbc4"/><path d="M1791 103 H1801 L1796.0 108.0 Z" fill="#b4bcc8"/><rect x="1823" y="80" width="11" height="13.6" fill="#fec760"/><rect x="1836" y="80" width="11" height="8" fill="#c98ee8"/><rect x="1823" y="96" width="11" height="8" fill="#f34f6c"/><rect x="1836" y="91" width="11" height="13" fill="#7fa8ff"/><path d="M1843 103 H1853 L1848.0 108.0 Z" fill="#b4bcc8"/><rect x="1873.5" y="80" width="18.5" height="20" fill="#26a69a"/><rect x="1895" y="80" width="5.3" height="8" fill="#26a69a"/><rect x="1895" y="89.5" width="5.3" height="10.5" fill="#26a69a"/><rect x="1873.5" y="102.6" width="9" height="2.8" fill="#26a69a"/><rect x="1884" y="102.6" width="16" height="2.8" fill="#26a69a"/><path d="M1882.8 84 Q1878.5 90 1879 93 Q1879.5 96 1882.8 96 Q1886 96 1886.5 93 Q1887 90 1882.8 84 Z" fill="#1e2a2c"/><path d="M1895 103 H1905 L1900.0 108.0 Z" fill="#b4bcc8"/><path d="M1928 82.5 H1933 Q1932 77 1936 77 Q1940 77 1939 82.5 H1945 V89 Q1950 88 1950 92 Q1950 96 1945 95.5 V105 H1939 Q1940 100 1935.5 100 Q1931 100 1932 105 H1928 Q1925.5 105 1925.5 103 V96 Q1929 97 1929 93.5 Q1929 90 1925.5 91 V84.5 Q1925.5 82.5 1928 82.5 Z" fill="#c5e68a"/><path d="M1947 103 H1957 L1952.0 108.0 Z" fill="#b4bcc8"/><path d="M31.6 137 H41.15 L44.15 140 H55.1 Q57.1 140 57.1 142 V159 Q57.1 161 55.1 161 H31.6 Q29.6 161 29.6 159 V139 Q29.6 137 31.6 137 Z" fill="#c98ee8"/><rect x="44.1" y="148.5" width="12" height="12" fill="#80cbc4" stroke="#16181c" stroke-width="1.6"/><path d="M413.5 137 H423.05 L426.05 140 H437.0 Q439.0 140 439.0 142 V159 Q439.0 161 437.0 161 H413.5 Q411.5 161 411.5 159 V139 Q411.5 137 413.5 137 Z" fill="#c98ee8"/><rect x="426.0" y="148.5" width="12" height="12" fill="#80cbc4" stroke="#16181c" stroke-width="1.6"/><path d="M869.8 137 H878.93 L881.93 140 H892.3 Q894.3 140 894.3 142 V157 Q894.3 159 892.3 159 H869.8 Q867.8 159 867.8 157 V139 Q867.8 137 869.8 137 Z" fill="#5c6bc0"/><path d="M882 149 L877.5 154 L882 159 M893 149 L897.5 154 L893 159 M889.5 147.5 L885.5 161" fill="none" stroke="#81d4fa" stroke-width="1.8"/><path d="M993.3 137 H1002.64 L1005.64 140 H1016.3 Q1018.3 140 1018.3 142 V157 Q1018.3 159 1016.3 159 H993.3 Q991.3 159 991.3 157 V139 Q991.3 137 993.3 137 Z" fill="#c6e0fb"/><path d="M1131.4 137 H1140.74 L1143.74 140 H1154.4 Q1156.4 140 1156.4 142 V157 Q1156.4 159 1154.4 159 H1131.4 Q1129.4 159 1129.4 157 V139 Q1129.4 137 1131.4 137 Z" fill="#82aaff"/><path d="M1270.1 138.5 H1278.9399999999998 L1281.9399999999998 141.5 H1292.1 Q1293.1 141.5 1293.1 143.5 V156.5 Q1293.1 157.5 1292.1 157.5 H1270.1 Q1269.1 157.5 1269.1 156.5 V139.5 Q1269.1 138.5 1270.1 138.5 Z" fill="none" stroke="#ffc862" stroke-width="3"/><circle cx="1275.1" cy="151" r="2.8" fill="#80cbc4"/><path d="M1394.2 138.5 H1403.04 L1406.04 141.5 H1416.2 Q1417.2 141.5 1417.2 143.5 V156.5 Q1417.2 157.5 1416.2 157.5 H1394.2 Q1393.2 157.5 1393.2 156.5 V139.5 Q1393.2 138.5 1394.2 138.5 Z" fill="none" stroke="#ffc862" stroke-width="3"/><circle cx="1399.2" cy="151" r="2.8" fill="#80cbc4"/><path d="M1560.5 138.5 H1569.34 L1572.34 141.5 H1582.5 Q1583.5 141.5 1583.5 143.5 V156.5 Q1583.5 157.5 1582.5 157.5 H1560.5 Q1559.5 157.5 1559.5 156.5 V139.5 Q1559.5 138.5 1560.5 138.5 Z" fill="none" stroke="#ffc862" stroke-width="3"/><circle cx="1565.5" cy="151" r="2.8" fill="#80cbc4"/><path d="M1865.4 137 H1874.74 L1877.74 140 H1888.4 Q1890.4 140 1890.4 142 V157 Q1890.4 159 1888.4 159 H1865.4 Q1863.4 159 1863.4 157 V139 Q1863.4 137 1865.4 137 Z" fill="#00796b"/><rect x="1876" y="146" width="14" height="15" rx="1.5" fill="#d7ece6"/><rect x="1879" y="150" width="8" height="1.8" fill="#00796b"/><rect x="1879" y="154" width="8" height="1.8" fill="#00796b"/><path d="M1989 137 H1998.34 L2001.34 140 H2012 Q2014 140 2014 142 V157 Q2014 159 2012 159 H1989 Q1987 159 1987 157 V139 Q1987 137 1989 137 Z" fill="#4db6ac"/><g fill="none" stroke="#e0f2ee" stroke-width="1.6"><ellipse cx="2007.5" cy="155" rx="8" ry="3.5" transform="rotate(45 2007.5 155)"/><ellipse cx="2007.5" cy="155" rx="8" ry="3.5" transform="rotate(-45 2007.5 155)"/></g><circle cx="2007.5" cy="155" r="1.6" fill="#e0f2ee"/><path d="M2139.0 136 L2151 142.6 V155.8 L2139.0 162.4 L2127 155.8 V142.6 Z" fill="#4fc3f7"/><path d="M2139.0 139.696 L2145.96 143.524 L2139.0 147.352 L2132.04 143.524 Z" fill="#262a33"/><path d="M2130.50 134.20 L2130.50 145.80 M2125.48 137.10 L2135.52 142.90 M2135.52 137.10 L2125.48 142.90 " stroke="#ffffff" stroke-width="1.9" fill="none"/><path d="M2132.30 145.80 L2128.70 145.80 M2126.38 144.46 L2124.58 141.34 M2124.58 138.66 L2126.38 135.54 M2128.70 134.20 L2132.30 134.20 M2134.62 135.54 L2136.42 138.66 M2136.42 141.34 L2134.62 144.46 " stroke="#ffffff" stroke-width="1.5" fill="none"/><circle cx="2130.5" cy="140" r="2.6" fill="#4fc3f7" stroke="#ffffff" stroke-width="1.5"/><path d="M383 140 L391.525 147.75 L383 155.5" fill="none" stroke="#c3c7cd" stroke-width="2.6" stroke-linejoin="miter"/><path d="M838.6 140 L847.125 147.75 L838.6 155.5" fill="none" stroke="#c3c7cd" stroke-width="2.6" stroke-linejoin="miter"/><path d="M962.6 140 L971.4 148.0 L962.6 156" fill="none" stroke="#c3c7cd" stroke-width="2.6" stroke-linejoin="miter"/><path d="M1100.5 140 L1109.3 148.0 L1100.5 156" fill="none" stroke="#c3c7cd" stroke-width="2.6" stroke-linejoin="miter"/><path d="M1238.3 140 L1247.1 148.0 L1238.3 156" fill="none" stroke="#c3c7cd" stroke-width="2.6" stroke-linejoin="miter"/><path d="M1362.4 140 L1371.2 148.0 L1362.4 156" fill="none" stroke="#c3c7cd" stroke-width="2.6" stroke-linejoin="miter"/><path d="M1527.8 140 L1536.6 148.0 L1527.8 156" fill="none" stroke="#c3c7cd" stroke-width="2.6" stroke-linejoin="miter"/><path d="M1835.5 140 L1844.3 148.0 L1835.5 156" fill="none" stroke="#c3c7cd" stroke-width="2.6" stroke-linejoin="miter"/><path d="M1958.9 140 L1967.7 148.0 L1958.9 156" fill="none" stroke="#c3c7cd" stroke-width="2.6" stroke-linejoin="miter"/><path d="M2096.6 140 L2105.4 148.0 L2096.6 156" fill="none" stroke="#c3c7cd" stroke-width="2.6" stroke-linejoin="miter"/><path d="M87.2 202.4 L99.4 209.11 V222.53 L87.2 229.24 L75 222.53 V209.11 Z" fill="#4fc3f7"/><path d="M87.2 206.1576 L94.276 210.0494 L87.2 213.9412 L80.124 210.0494 Z" fill="#262a33"/><path d="M91.3 203.5 L87.6 207.4 L91.3 211 M95.6 203.5 L99.4 207.4 L96 210.8 M93.4 215.3 L97.3 218.8 L102.5 212.5" fill="none" stroke="#62bb5c" stroke-width="2.2"/><path d="M378.5 209 L391.5 222 M391.5 209 L378.5 222" stroke="#a3a8ae" stroke-width="2"/><path d="M439.0 202.5 L451.09999999999997 209.155 V222.465 L439.0 229.12 L426.9 222.465 V209.155 Z" fill="#4fc3f7"/><path d="M439.0 206.2268 L446.018 210.0867 L439.0 213.9466 L431.98199999999997 210.0867 Z" fill="#433f6a"/><path d="M431.00 202.20 L431.00 213.80 M425.98 205.10 L436.02 210.90 M436.02 205.10 L425.98 210.90 " stroke="#ffffff" stroke-width="1.9" fill="none"/><path d="M432.80 213.80 L429.20 213.80 M426.88 212.46 L425.08 209.34 M425.08 206.66 L426.88 203.54 M429.20 202.20 L432.80 202.20 M435.12 203.54 L436.92 206.66 M436.92 209.34 L435.12 212.46 " stroke="#ffffff" stroke-width="1.5" fill="none"/><circle cx="431" cy="208" r="2.6" fill="#4fc3f7" stroke="#ffffff" stroke-width="1.5"/><path d="M897.5 209.5 L911.5 223 M911.5 209.5 L897.5 223" stroke="#a3a8ae" stroke-width="2"/><circle cx="34" cy="347" r="11" fill="none" stroke="#e4e6e8" stroke-width="2.2"/><path d="M28 353 V341 L34 350 L40 341 V353 M28 353 H40" fill="none" stroke="#e4e6e8" stroke-width="1.8"/><g transform="translate(22 1331) scale(0.75)"><path d="M9.5 9.5 L0.5 15.5 L7 16.5 Z" fill="#7ea81a"/><path d="M16.5 17 L11 26.5 L10 19 Z" fill="#7ea81a"/><path d="M26.5 0.5 C27.8 7 24.5 13 18.5 18.5 L12.5 21.5 C9 22.5 5.5 19.5 5.5 16 L9 10 C14.5 4.5 20.5 0.5 26.5 0.5 Z" fill="#93c01f"/><path d="M26.5 0.5 C27.5 4 26.5 7 25 9 L20.5 4 C22.5 2 24.5 1 26.5 0.5 Z" fill="#7ea81a"/><circle cx="18" cy="9.5" r="2.2" fill="#fff"/></g><text x="31" y="1358" font-family="Liberation Sans, sans-serif" font-weight="bold" font-size="10" fill="#fff">JR</text><circle cx="33.5" cy="1455.5" r="10" fill="#5fb8f0"/><path d="M26 1450 Q31 1448 32 1452 Q30 1456 35 1459 L33 1465 M37 1447 Q40 1451 43 1452 M38 1462 Q41 1457 43 1458" stroke="#262a33" stroke-width="2.5" fill="none"/><path d="M2424.3 198.5 Q2428.5 203 2430.8 210.5 Q2434.5 202 2440.8 196 Q2435.5 205 2433 217 Q2430.5 216.5 2428.5 213 Q2426 206 2424.3 198.5 Z" fill="#f2356f"/><path d="M2424 343.5 V355 Q2424 359.5 2432.5 359.5 Q2441 359.5 2441 355 V343.5 Q2441 339.5 2432.5 339.5 Q2424 339.5 2424 343.5 Z" fill="#fba81c"/><path d="M2424 347 Q2432.5 351.5 2441 347 M2424 352.5 Q2432.5 357 2441 352.5" stroke="#262a33" stroke-width="1.5" fill="none"/><rect x="2422.5" y="1279" width="19.5" height="20" fill="#fcc419"/><rect x="2431.5" y="1279" width="1.5" height="20" fill="#262a33"/><circle cx="2426" cy="1285" r="1.5" fill="#262a33"/><circle cx="2426" cy="1293" r="1.5" fill="#262a33"/><path d="M81 1504 L93 1511.5 L81 1519 Z" fill="#b4dc8c"/><circle cx="95.3" cy="1520" r="4" fill="#16d81a" stroke="#14161a" stroke-width="1"/><rect x="231.5" y="1502.5" width="17" height="17" rx="2" fill="none" stroke="#b07b63" stroke-width="2.8"/><path d="M235.5 1505 V1517 L240 1513.5 L244.5 1517 V1505" fill="#b07b63"/><path d="M240 1506.5 L241 1509 L243.5 1509 L241.5 1510.5 L242.3 1513 L240 1511.5 L237.7 1513 L238.5 1510.5 L236.5 1509 L239 1509 Z" fill="#262a33"/><rect x="395" y="1502" width="21" height="19" rx="2.5" fill="#a8877b"/><rect x="399" y="1513" width="5" height="2.5" fill="#262a33"/><path d="M534 1521 Q533 1506 548 1503 Q554 1502 559 1499 Q559 1512 551 1517 Q543 1522 534 1521 Z" fill="#a8aaad"/><path d="M536 1519 Q545 1510 553 1506" stroke="#262a33" stroke-width="1.4" fill="none"/><rect x="688" y="1501" width="24" height="20" rx="1.5" fill="#b86ea4"/><path d="M692 1506 L697 1510 L692 1514" stroke="#262a33" stroke-width="2" fill="none"/><rect x="698" y="1513.5" width="6" height="2" fill="#262a33"/><circle cx="880" cy="1511" r="10.5" fill="#5fb8f0"/><path d="M872 1505 Q877 1503 878 1507 Q876 1511 881 1514 L879 1520.5 M884 1502 Q886 1506 890 1507 M884 1518 Q887 1513 890 1514" stroke="#262a33" stroke-width="2.5" fill="none"/><path d="M1984 1499 Q1996.5 1499 1996.5 1511.5 V1523.5 H1984 Q1971.5 1523.5 1971.5 1511.5 Q1971.5 1499 1984 1499 Z" fill="none" stroke="#a9acb0" stroke-width="2.6"/><g transform="translate(2171.5 1498) scale(0.75)"><path d="M9.5 9.5 L0.5 15.5 L7 16.5 Z" fill="#7ea81a"/><path d="M16.5 17 L11 26.5 L10 19 Z" fill="#7ea81a"/><path d="M26.5 0.5 C27.8 7 24.5 13 18.5 18.5 L12.5 21.5 C9 22.5 5.5 19.5 5.5 16 L9 10 C14.5 4.5 20.5 0.5 26.5 0.5 Z" fill="#93c01f"/><path d="M26.5 0.5 C27.5 4 26.5 7 25 9 L20.5 4 C22.5 2 24.5 1 26.5 0.5 Z" fill="#7ea81a"/><circle cx="18" cy="9.5" r="2.2" fill="#fff"/></g><text x="2184" y="1525" font-family="Liberation Sans, sans-serif" font-weight="bold" font-size="10" fill="#fff">JR</text><path d="M37 1556 L48.5 1563 L37 1570 L25.5 1563 Z" fill="#ffffff"/><path d="M25.5 1569.5 L37 1576.5 L48.5 1569.5" fill="none" stroke="#fff" stroke-width="2.6"/><path d="M2313 1565 V1559.5 Q2313 1554.5 2318 1554.5 Q2323 1554.5 2323 1559.5" fill="none" stroke="#8a9aa6" stroke-width="2.4"/><rect x="2317.5" y="1564" width="16" height="12" fill="#8a9aa6"/><path d="M2388 1560 Q2388 1552 2394.5 1552 Q2401 1552 2401 1560 Z" fill="#9b9b9b"/><rect x="2382.5" y="1559" width="24" height="2.5" fill="#9b9b9b"/><circle cx="2394.5" cy="1566.5" r="6" fill="#9b9b9b"/><path d="M2385 1578 Q2386 1571 2394.5 1571 Q2403 1571 2404 1578 Z" fill="#9b9b9b"/><circle cx="2392" cy="1565.5" r="0.9" fill="#262a33"/><circle cx="2397" cy="1565.5" r="0.9" fill="#262a33"/><path d="M2391.5 1568.5 Q2394.5 1570.5 2397.5 1568.5" stroke="#262a33" stroke-width="0.9" fill="none"/><g fill="none" stroke="#cdc21d" stroke-width="1.5" stroke-linecap="round"><path d="M1396.5 388.6 H1409.5 M1397 391.7 H1408.5 M1410.5 387.5 L1409 395 M1390.5 395.7 H1414"/><path d="M1402.5 396 L1399 409 Q1398 410.5 1396 408.5"/><path d="M1394 398 L1395.5 401 M1388 408 L1398 402.5 M1402.5 400 Q1405 405 1409 407.5 M1409 397.5 L1403.5 401"/><path d="M1425.5 387.5 L1415.5 399.5 M1420.5 394 L1415.8 410.5"/><path d="M1431 387.5 L1428.5 391 M1428.5 390.5 H1438 L1436.5 393"/><path d="M1428 392.5 H1439 L1438 397.5 H1427 Z M1433.5 392.5 L1432.5 397.5"/><path d="M1423.5 403.5 L1433.5 399 M1421.5 406.5 L1434 401.5 M1420.5 409.8 L1432.5 405 M1431.5 398.5 Q1431 405 1428 410.5 M1432.5 400 Q1434 405 1436 408.5"/></g><circle cx="1893" cy="1565.8" r="14.1" fill="#42a5f5"/><path d="M0 950.5 H3 Q5.2 950.5 5.2 953 V963 H8.5 Q11 963 11 965.5 V980.5 Q11 983 8.5 983 H5.2 V992.5 Q5.2 995 3 995 H0 Z" fill="#ffffff" stroke="#0c1a1e" stroke-width="1.4"/><rect x="0" y="955" width="1.1" height="35.5" fill="#0c1a1e"/><text x="-3.5" y="1382.5" font-family="Liberation Sans, sans-serif" font-size="25" fill="#f0f0f0">8</text><rect x="0" y="192" width="4" height="1.6" fill="#8a9299"/><rect x="0" y="198" width="4" height="1.6" fill="#8a9299"/></svg>
</body></html>
